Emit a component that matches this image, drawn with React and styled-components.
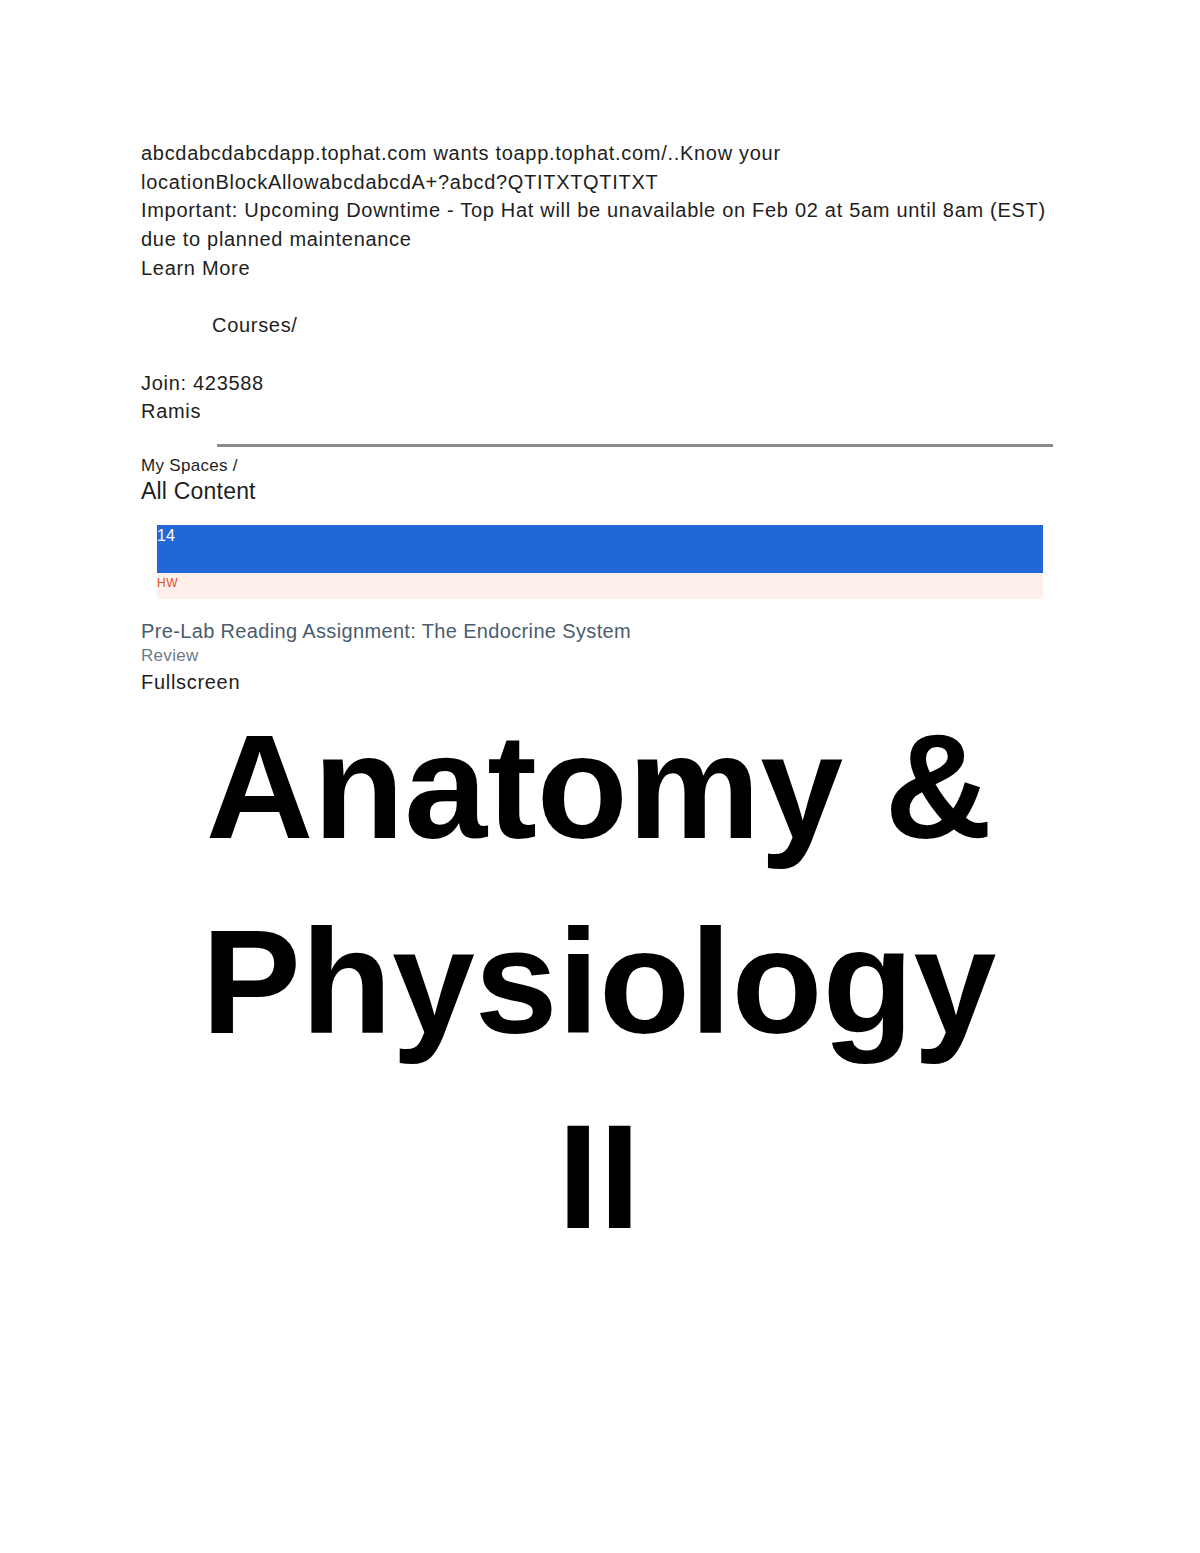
import React from 'react'
import styled, { createGlobalStyle } from 'styled-components'

const GlobalStyle = createGlobalStyle`
    body {
        margin: 0;
        background: #ffffff;
        font-family: "Liberation Sans", Arial, sans-serif;
        color: #1e1e1e;
    }
`

function App() {
    return (
        <>
            <GlobalStyle />
            <Page>
                <Notice>
                    <Line>abcdabcdabcdapp.tophat.com wants toapp.tophat.com/..Know your locationBlockAllowabcdabcdA+?abcd?QTITXTQTITXT</Line>
                    <Line>Important: Upcoming Downtime - Top Hat will be unavailable on Feb 02 at 5am until 8am (EST) due to planned maintenance</Line>
                    <Line>Learn More</Line>
                </Notice>
                <Crumb>Courses/</Crumb>
                <CourseInfo>
                    <Line>Join: 423588</Line>
                    <Line>Ramis</Line>
                </CourseInfo>
                <Divider />
                <Small>My Spaces /</Small>
                <Heading>All Content</Heading>
                <Card>
                    <CardTop>14</CardTop>
                    <CardTag>HW</CardTag>
                </Card>
                <ItemTitle>Pre-Lab Reading Assignment: The Endocrine System</ItemTitle>
                <ItemStatus>Review</ItemStatus>
                <Line>Fullscreen</Line>
                <Cover>
                    Anatomy &amp;<br />
                    Physiology<br />
                    II
                </Cover>
            </Page>
        </>
    )
}

export default App

const Page = styled.div`
    width: 914px;
    padding: 139px 0 200px 141px;
`
const Notice = styled.div``

const Line = styled.div`
    font-size: 20px;
    line-height: 28.7px;
    letter-spacing: 0.7px;
`
const Crumb = styled(Line)`
    margin-top: 28.7px;
    padding-left: 71px;
`
const CourseInfo = styled.div`
    margin-top: 28.7px;
`
const Divider = styled.div`
    margin: 18px 2px 0 76px;
    height: 3px;
    background: #8a8a8a;
`
const Small = styled.div`
    font-size: 17px;
    line-height: 22px;
    margin-top: 8px;
    letter-spacing: 0.3px;
`
const Heading = styled.div`
    font-size: 23px;
    line-height: 28px;
    letter-spacing: 0.2px;
`
const Card = styled.div`
    margin: 20px 12px 0 16px;
`
const CardTop = styled.div`
    height: 48px;
    background: #2167d8;
    color: #ffffff;
    font-size: 16px;
    line-height: 22px;
`
const CardTag = styled.div`
    height: 26px;
    background: #fdf0eb;
    color: #e0501f;
    font-size: 12px;
    line-height: 20px;
    letter-spacing: 0.5px;
`
const ItemTitle = styled.div`
    margin-top: 19px;
    font-size: 20px;
    line-height: 26px;
    letter-spacing: 0.35px;
    color: #4a5c6e;
`
const ItemStatus = styled.div`
    font-size: 17px;
    line-height: 24px;
    letter-spacing: 0.3px;
    color: #6b7a88;
`
const Cover = styled.div`
    font-weight: bold;
    font-size: 149px;
    line-height: 195px;
    text-align: center;
    color: #000000;
    margin-top: -8px;
    margin-right: -2px;
`
